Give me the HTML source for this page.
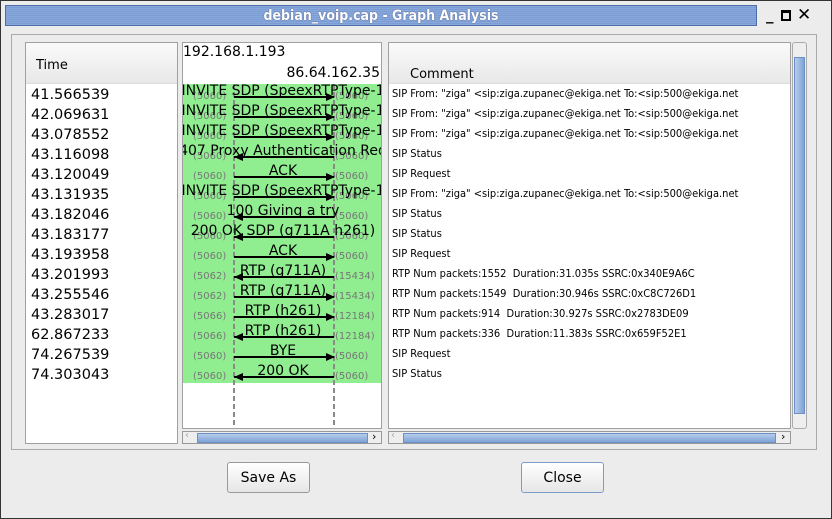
<!DOCTYPE html><html><head><style>
*{margin:0;padding:0;box-sizing:border-box}
body{width:832px;height:519px;background:#5a7eb0;font-family:"DejaVu Sans","Liberation Sans",sans-serif;position:relative;overflow:hidden}
.abs{position:absolute}
#win{left:0;top:0;width:832px;height:519px;background:#ececec;border:1px solid #333}
#title{left:5px;top:5px;width:752px;height:21px;background:repeating-linear-gradient(#89a9dc 0 1px,#7c9dd4 1px 2px);border:1px solid #4d6ea8;color:#fff;font-size:14px;font-weight:bold;text-align:center;line-height:20px;font-family:"DejaVu Sans Condensed","DejaVu Sans",sans-serif;text-shadow:0 0 1px #335}
.panel{background:#fff;border:1px solid #a0a0a0}
.hdr{background:linear-gradient(#fafafa,#e8e8e8);}
.t{position:absolute;left:5px;font-size:14.5px;color:#000;line-height:20px}
.c{position:absolute;left:3px;font-size:11px;color:#000;line-height:20px;white-space:nowrap;font-family:"DejaVu Sans Condensed","DejaVu Sans",sans-serif}
.row{position:absolute;left:0;width:199px;height:20px}
.lbl{position:absolute;left:-5px;width:210px;text-align:center;font-size:14px;top:-2px;line-height:18px;white-space:nowrap;color:#000}
.pl,.pr{position:absolute;font-size:10px;color:#777;top:7px;line-height:12px}
.pl{left:10px}.pr{left:152px}
.ln{position:absolute;left:51px;width:100px;top:12px;height:1.5px;background:#000}
.ar{position:absolute;top:9px;width:0;height:0;border-top:4px solid transparent;border-bottom:4px solid transparent}
.r .ar{left:143px;border-left:9px solid #000}
.l .ar{left:51px;border-right:9px solid #000}
.hs{height:13px;border:1px solid #999;background:#eee}
.hs .th{position:absolute;top:1px;height:10px;background:linear-gradient(#b6cdeb,#7fa3d6);border:1px solid #6c8fc6}
.btn{border:1px solid #999;border-radius:3px;background:linear-gradient(#fff,#e6e6e6);font-size:14px;text-align:center;line-height:30px}
.dl{position:absolute;top:41px;width:2px;height:346px;background:repeating-linear-gradient(#8a8a8a 0 5px,transparent 5px 8px)}
</style></head><body>
<div id="win" class="abs"></div>
<div id="title" class="abs">debian_voip.cap - Graph Analysis</div>
<div class="abs" style="left:766px;top:6px;font-size:15px;font-weight:bold;color:#000">_</div>
<div class="abs" style="left:781px;top:10px;width:10px;height:11px;border:2px solid #000;border-top-width:3px"></div>
<div class="abs" style="left:797px;top:5px;font-size:17px;font-weight:bold">✕</div>
<div class="abs" style="left:11px;top:34px;width:806px;height:416px;border:1px solid #aaa"></div>

<div class="abs panel" style="left:25px;top:42px;width:153px;height:402px">
<div class="abs hdr" style="left:0;top:0;width:151px;height:41px;border-bottom:1px solid #ddd"><span style="position:absolute;left:10px;top:15px;font-size:13px">Time</span></div>
<div class="t" style="top:42px">41.566539</div><div class="t" style="top:62px">42.069631</div><div class="t" style="top:82px">43.078552</div><div class="t" style="top:102px">43.116098</div><div class="t" style="top:122px">43.120049</div><div class="t" style="top:142px">43.131935</div><div class="t" style="top:162px">43.182046</div><div class="t" style="top:182px">43.183177</div><div class="t" style="top:202px">43.193958</div><div class="t" style="top:222px">43.201993</div><div class="t" style="top:242px">43.255546</div><div class="t" style="top:262px">43.283017</div><div class="t" style="top:282px">62.867233</div><div class="t" style="top:302px">74.267539</div><div class="t" style="top:322px">74.303043</div>
</div>

<div class="abs panel" style="left:182px;top:42px;width:200px;height:387px;overflow:hidden">
<div class="abs" style="left:0;top:0;font-size:14px;line-height:18px">192.168.1.193</div>
<div class="abs" style="right:1px;top:21px;font-size:14px;line-height:18px">86.64.162.35</div>
<div class="abs" style="left:0;top:41px;width:200px;height:299px;background:#90ee90"></div>
<div class="dl" style="left:50px"></div>
<div class="dl" style="left:150px"></div>
<div class="abs" style="left:0;top:41px;width:200px;height:300px">
<div class="row r" style="top:0"><div class="pl">(5060)</div><div class="pr">(5060)</div><div class="ln"></div><div class="ar"></div><div class="lbl">INVITE SDP (SpeexRTPType-1</div></div>
<div class="row r" style="top:20px"><div class="pl">(5060)</div><div class="pr">(5060)</div><div class="ln"></div><div class="ar"></div><div class="lbl">INVITE SDP (SpeexRTPType-1</div></div>
<div class="row r" style="top:40px"><div class="pl">(5060)</div><div class="pr">(5060)</div><div class="ln"></div><div class="ar"></div><div class="lbl">INVITE SDP (SpeexRTPType-1</div></div>
<div class="row l" style="top:60px"><div class="pl">(5060)</div><div class="pr">(5060)</div><div class="ln"></div><div class="ar"></div><div class="lbl">407 Proxy Authentication Req</div></div>
<div class="row r" style="top:80px"><div class="pl">(5060)</div><div class="pr">(5060)</div><div class="ln"></div><div class="ar"></div><div class="lbl">ACK</div></div>
<div class="row r" style="top:100px"><div class="pl">(5060)</div><div class="pr">(5060)</div><div class="ln"></div><div class="ar"></div><div class="lbl">INVITE SDP (SpeexRTPType-1</div></div>
<div class="row l" style="top:120px"><div class="pl">(5060)</div><div class="pr">(5060)</div><div class="ln"></div><div class="ar"></div><div class="lbl">100 Giving a try</div></div>
<div class="row l" style="top:140px"><div class="pl">(5060)</div><div class="pr">(5060)</div><div class="ln"></div><div class="ar"></div><div class="lbl">200 OK SDP (g711A h261)</div></div>
<div class="row r" style="top:160px"><div class="pl">(5060)</div><div class="pr">(5060)</div><div class="ln"></div><div class="ar"></div><div class="lbl">ACK</div></div>
<div class="row l" style="top:180px"><div class="pl">(5062)</div><div class="pr">(15434)</div><div class="ln"></div><div class="ar"></div><div class="lbl">RTP (g711A)</div></div>
<div class="row r" style="top:200px"><div class="pl">(5062)</div><div class="pr">(15434)</div><div class="ln"></div><div class="ar"></div><div class="lbl">RTP (g711A)</div></div>
<div class="row r" style="top:220px"><div class="pl">(5066)</div><div class="pr">(12184)</div><div class="ln"></div><div class="ar"></div><div class="lbl">RTP (h261)</div></div>
<div class="row l" style="top:240px"><div class="pl">(5066)</div><div class="pr">(12184)</div><div class="ln"></div><div class="ar"></div><div class="lbl">RTP (h261)</div></div>
<div class="row r" style="top:260px"><div class="pl">(5060)</div><div class="pr">(5060)</div><div class="ln"></div><div class="ar"></div><div class="lbl">BYE</div></div>
<div class="row l" style="top:280px"><div class="pl">(5060)</div><div class="pr">(5060)</div><div class="ln"></div><div class="ar"></div><div class="lbl">200 OK</div></div>
</div>
</div>
<div class="abs hs" style="left:182px;top:431px;width:200px"><div class="th" style="left:14px;width:171px"></div><span class="abs" style="left:2px;top:-2px;font-size:10px;color:#aaa">‹</span><span class="abs" style="left:189px;top:-2px;font-size:11px">›</span></div>

<div class="abs panel" style="left:388px;top:42px;width:403px;height:387px">
<div class="abs hdr" style="left:0;top:0;width:401px;height:41px;border-bottom:1px solid #ddd"><span style="position:absolute;left:21px;top:24px;font-size:13px">Comment</span></div>
<div class="c" style="top:41px">SIP From: "ziga" &lt;sip:ziga.zupanec@ekiga.net To:&lt;sip:500@ekiga.net</div>
<div class="c" style="top:61px">SIP From: "ziga" &lt;sip:ziga.zupanec@ekiga.net To:&lt;sip:500@ekiga.net</div>
<div class="c" style="top:81px">SIP From: "ziga" &lt;sip:ziga.zupanec@ekiga.net To:&lt;sip:500@ekiga.net</div>
<div class="c" style="top:101px">SIP Status</div>
<div class="c" style="top:121px">SIP Request</div>
<div class="c" style="top:141px">SIP From: "ziga" &lt;sip:ziga.zupanec@ekiga.net To:&lt;sip:500@ekiga.net</div>
<div class="c" style="top:161px">SIP Status</div>
<div class="c" style="top:181px">SIP Status</div>
<div class="c" style="top:201px">SIP Request</div>
<div class="c" style="top:221px">RTP Num packets:1552 &nbsp;Duration:31.035s SSRC:0x340E9A6C</div>
<div class="c" style="top:241px">RTP Num packets:1549 &nbsp;Duration:30.946s SSRC:0xC8C726D1</div>
<div class="c" style="top:261px">RTP Num packets:914 &nbsp;Duration:30.927s SSRC:0x2783DE09</div>
<div class="c" style="top:281px">RTP Num packets:336 &nbsp;Duration:11.383s SSRC:0x659F52E1</div>
<div class="c" style="top:301px">SIP Request</div>
<div class="c" style="top:321px">SIP Status</div>
</div>
<div class="abs" style="left:792px;top:42px;width:15px;height:387px;border:1px solid #aaa;border-radius:3px;background:#eee">
<div class="abs" style="left:1px;top:14px;width:11px;height:357px;background:linear-gradient(90deg,#b6cdeb,#7fa3d6);border:1px solid #6c8fc6"></div>
</div>
<div class="abs hs" style="left:388px;top:431px;width:403px"><div class="th" style="left:14px;width:373px"></div><span class="abs" style="left:2px;top:-2px;font-size:10px;color:#aaa">‹</span><span class="abs" style="left:392px;top:-2px;font-size:11px">›</span></div>

<div class="abs btn" style="left:227px;top:462px;width:83px;height:31px">Save As</div>
<div class="abs btn" style="left:521px;top:462px;width:83px;height:31px;border-color:#7a9cc8">Close</div>
</body></html>
